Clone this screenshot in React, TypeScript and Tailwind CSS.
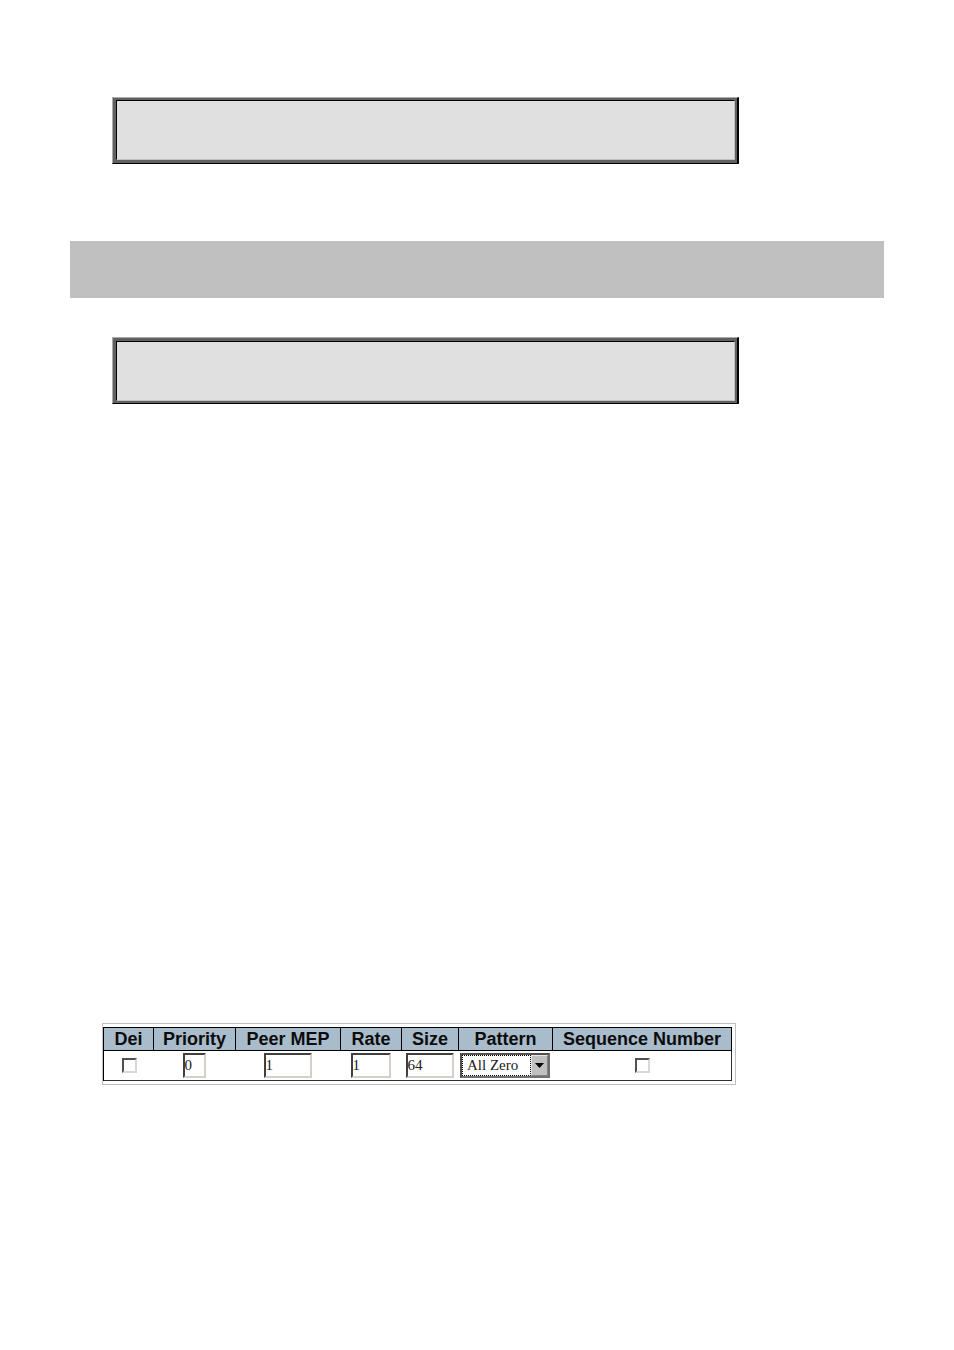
const HEADINGS = ["Dei", "Priority", "Peer MEP", "Rate", "Size", "Pattern", "Sequence Number"];

const thClass =
  "h-[23px] border-r border-b border-black bg-[#a9bccb] p-0 text-center text-lg leading-none font-bold text-[#0c0c0c]";
const tdClass = "h-[30px] border-b border-[#303030] p-0 align-middle last:border-r";
const fieldTdClass = "h-[30px] border-b border-[#303030] p-0 pr-0.5 align-middle";
const fieldClass =
  "mx-auto block h-[25px] rounded-none border-2 border-t-[#404040] border-r-[#d4d0c8] border-b-[#d4d0c8] border-l-[#404040] bg-white font-['Liberation_Serif',serif] text-[15px] leading-none text-[#202020] outline-none";
const checkClass =
  "mx-auto block size-[15px] appearance-none border-2 border-t-[#505050] border-r-[#d8d8d8] border-b-[#d8d8d8] border-l-[#505050] bg-white checked:bg-[#505050]";

function Panel({ frame }: { frame: string }) {
  return (
    <div className="max-w-[627px] border border-t-[#acacac] border-r-2 border-b-black border-l-[#acacac] border-r-black">
      <div className={`border-[#606060] ${frame}`}>
        <div className="h-[60px] border border-t-black border-r-[#c0c0c0] border-b-[#c0c0c0] border-l-black bg-[#e0e0e0]" />
      </div>
    </div>
  );
}

function PatternSelect() {
  return (
    <div className="relative mx-auto h-[25px] w-[90px] border-2 border-t-[#505050] border-r-[#707070] border-b-[#707070] border-l-[#505050] bg-white">
      <select
        aria-label="Pattern"
        className="block h-full w-[69px] appearance-none rounded-none border border-dotted border-black bg-white pl-1 font-['Liberation_Serif',serif] text-[15px] leading-none text-[#202020] outline-none"
      >
        <option>All Zero</option>
        <option>All One</option>
        <option>10101010</option>
      </select>
      <span className="pointer-events-none absolute inset-y-0 right-0 flex w-[17px] items-center justify-center border border-t-[#e4e4e4] border-r-[#808080] border-b-[#808080] border-l-[#e4e4e4] bg-[#c0c0c0]">
        <svg viewBox="0 0 9 5" className="h-[5px] w-[9px]" fill="black" aria-hidden>
          <path d="M0 0h9L4.5 5z" />
        </svg>
      </span>
    </div>
  );
}

function TestTable() {
  return (
    <div className="w-fit border border-[#c0c0c0] py-[3px] pr-[3px]">
      <table className="w-[629px] table-fixed border-separate border-spacing-0 border-t border-l border-black">
        <colgroup>
          <col className="w-[50px]" />
          <col className="w-[82px]" />
          <col className="w-[105px]" />
          <col className="w-[61px]" />
          <col className="w-[57px]" />
          <col className="w-[94px]" />
          <col className="w-[179px]" />
        </colgroup>
        <thead>
          <tr>
            {HEADINGS.map((heading) => (
              <th key={heading} scope="col" className={thClass}>
                {heading}
              </th>
            ))}
          </tr>
        </thead>
        <tbody>
          <tr>
            <td className={tdClass}>
              <input type="checkbox" aria-label="Dei" className={checkClass} />
            </td>
            <td className={fieldTdClass}>
              <input type="text" aria-label="Priority" defaultValue="0" className={`${fieldClass} w-[23px]`} />
            </td>
            <td className={fieldTdClass}>
              <input type="text" aria-label="Peer MEP" defaultValue="1" className={`${fieldClass} w-[48px]`} />
            </td>
            <td className={fieldTdClass}>
              <input type="text" aria-label="Rate" defaultValue="1" className={`${fieldClass} w-[40px]`} />
            </td>
            <td className={fieldTdClass}>
              <input type="text" aria-label="Size" defaultValue="64" className={`${fieldClass} w-[48px]`} />
            </td>
            <td className={fieldTdClass}>
              <PatternSelect />
            </td>
            <td className={tdClass}>
              <input type="checkbox" aria-label="Sequence Number" className={checkClass} />
            </td>
          </tr>
        </tbody>
      </table>
    </div>
  );
}

export default function App() {
  return (
    <main className="min-h-screen bg-white px-[70px] pt-[97px] pb-16 font-['Liberation_Sans',Arial,sans-serif]">
      <div className="px-[42px]">
        <Panel frame="border-t-2 border-r-2 border-b-3 border-l-3" />
      </div>
      <div className="mt-[77px] h-[57px] bg-[#c0c0c0]" />
      <div className="mt-[39px] px-[42px]">
        <Panel frame="border-t-3 border-r-2 border-b-2 border-l-3" />
      </div>
      <div className="mt-[619px] px-8">
        <TestTable />
      </div>
    </main>
  );
}
